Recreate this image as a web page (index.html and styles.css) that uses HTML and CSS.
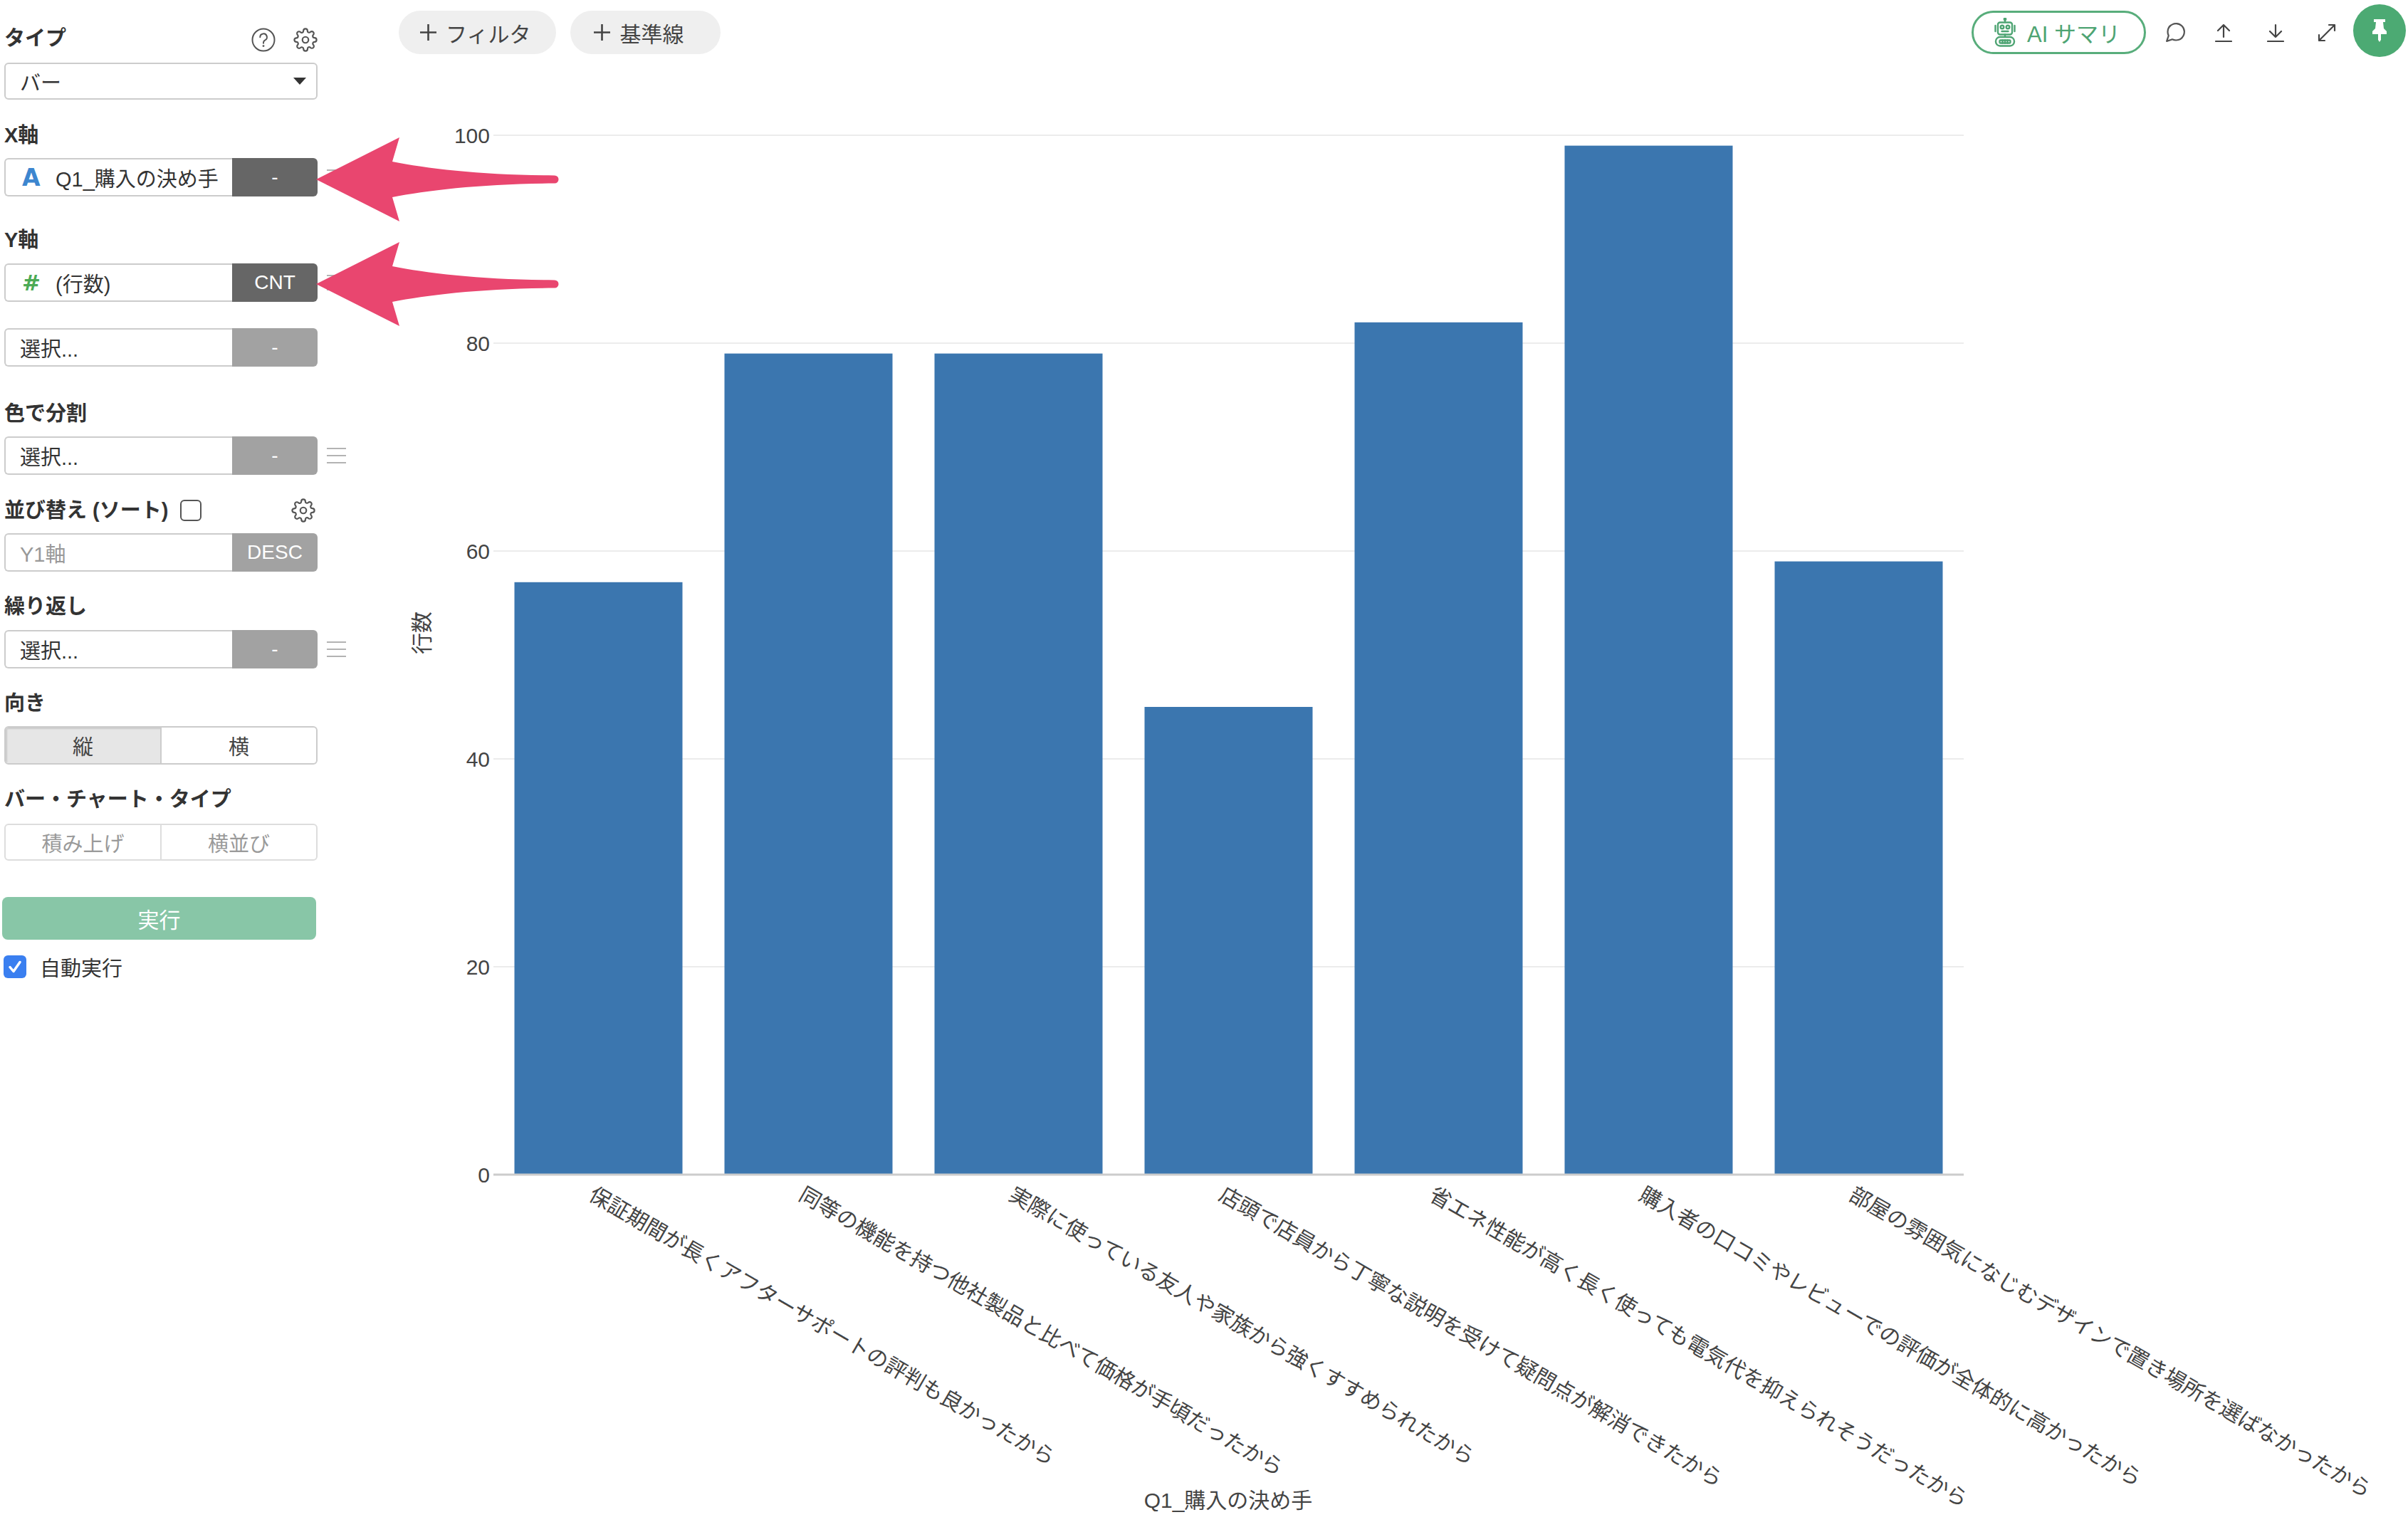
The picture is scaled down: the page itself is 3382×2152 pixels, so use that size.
FILE: index.html
```html
<!DOCTYPE html>
<html lang="ja">
<head>
<meta charset="utf-8">
<title>バー・チャート</title>
<link rel="stylesheet" href="styles.css">
</head>
<body>
<div class="app">
  <aside class="sidebar">
    <div class="head-row">
      <span class="label">タイプ</span>
      <span class="head-icons">
        <svg class="icon-help" viewBox="0 0 34 34"><circle cx="17" cy="17" r="15.5"/><path d="M12.3 13.2a4.8 4.8 0 1 1 7 4.2c-1.6.9-2.3 1.7-2.3 3.4v1"/><circle class="dot" cx="17" cy="25.6" r="1.4"/></svg>
        <svg class="icon-gear" viewBox="0 0 24 24"><circle cx="12" cy="12" r="3"/><path d="M19.4 15a1.65 1.65 0 0 0 .33 1.82l.06.06a2 2 0 0 1 0 2.83 2 2 0 0 1-2.83 0l-.06-.06a1.65 1.65 0 0 0-1.82-.33 1.65 1.65 0 0 0-1 1.51V21a2 2 0 0 1-2 2 2 2 0 0 1-2-2v-.09A1.65 1.65 0 0 0 9 19.4a1.65 1.65 0 0 0-1.820.33l-.06.06a2 2 0 0 1-2.83 0 2 2 0 0 1 0-2.83l.06-.06a1.65 1.65 0 0 0 .33-1.82 1.65 1.65 0 0 0-1.51-1H3a2 2 0 0 1-2-2 2 2 0 0 1 2-2h.09A1.65 1.65 0 0 0 4.6 9a1.65 1.65 0 0 0-.33-1.82l-.06-.06a2 2 0 0 1 0-2.83 2 2 0 0 1 2.83 0l.06.06a1.65 1.65 0 0 0 1.82.33H9a1.65 1.65 0 0 0 1-1.51V3a2 2 0 0 1 2-2 2 2 0 0 1 2 2v.09a1.65 1.65 0 0 0 1 1.51 1.65 1.65 0 0 0 1.82-.33l.06-.06a2 2 0 0 1 2.83 0 2 2 0 0 1 0 2.83l-.06.06a1.65 1.65 0 0 0-.33 1.82V9a1.65 1.65 0 0 0 1.51 1H21a2 2 0 0 1 2 2 2 2 0 0 1-2 2h-.09a1.65 1.65 0 0 0-1.51 1z"/></svg>
      </span>
    </div>
    <div class="select mt-16">
      <span>バー</span>
      <span class="caret"></span>
    </div>

    <div class="label mt-32">X軸</div>
    <div class="row mt-14">
      <div class="field">
        <span class="field-text"><span class="type-icon type-str">A</span>Q1_購入の決め手</span>
        <span class="field-btn dark">-</span>
      </div>
      <svg class="menu" viewBox="0 0 27 22"><path d="M0 1h27M0 11h27M0 21h27"/></svg>
    </div>

    <div class="label mt-43">Y軸</div>
    <div class="row mt-15">
      <div class="field">
        <span class="field-text"><span class="type-icon type-num">#</span>(行数)</span>
        <span class="field-btn dark">CNT</span>
      </div>
      <svg class="menu" viewBox="0 0 27 22"><path d="M0 1h27M0 11h27M0 21h27"/></svg>
    </div>

    <div class="row mt-37">
      <div class="field">
        <span class="field-text">選択...</span>
        <span class="field-btn light">-</span>
      </div>
    </div>

    <div class="label mt-48">色で分割</div>
    <div class="row mt-14">
      <div class="field">
        <span class="field-text">選択...</span>
        <span class="field-btn light">-</span>
      </div>
      <svg class="menu" viewBox="0 0 27 22"><path d="M0 1h27M0 11h27M0 21h27"/></svg>
    </div>

    <div class="sort-row mt-32">
      <span class="label">並び替え (ソート)</span>
      <span class="box"></span>
      <svg class="icon-gear push" viewBox="0 0 24 24"><circle cx="12" cy="12" r="3"/><path d="M19.4 15a1.65 1.65 0 0 0 .33 1.82l.06.06a2 2 0 0 1 0 2.83 2 2 0 0 1-2.83 0l-.06-.06a1.65 1.65 0 0 0-1.82-.33 1.65 1.65 0 0 0-1 1.51V21a2 2 0 0 1-2 2 2 2 0 0 1-2-2v-.09A1.65 1.65 0 0 0 9 19.4a1.65 1.65 0 0 0-1.82.33l-.06.06a2 2 0 0 1-2.83 0 2 2 0 0 1 0-2.83l.06-.06a1.65 1.65 0 0 0 .33-1.82 1.65 1.65 0 0 0-1.51-1H3a2 2 0 0 1-2-2 2 2 0 0 1 2-2h.09A1.65 1.65 0 0 0 4.6 9a1.65 1.65 0 0 0-.33-1.82l-.06-.06a2 2 0 0 1 0-2.83 2 2 0 0 1 2.83 0l.06.06a1.65 1.65 0 0 0 1.82.33H9a1.65 1.65 0 0 0 1-1.51V3a2 2 0 0 1 2-2 2 2 0 0 1 2 2v.09a1.65 1.65 0 0 0 1 1.51 1.65 1.65 0 0 0 1.82-.33l.06-.06a2 2 0 0 1 2.83 0 2 2 0 0 1 0 2.83l-.06.06a1.65 1.65 0 0 0-.33 1.82V9a1.65 1.65 0 0 0 1.51 1H21a2 2 0 0 1 2 2 2 2 0 0 1-2 2h-.09a1.65 1.65 0 0 0-1.51 1z"/></svg>
    </div>
    <div class="row mt-14">
      <div class="field">
        <span class="field-text muted">Y1軸</span>
        <span class="field-btn light">DESC</span>
      </div>
    </div>

    <div class="label mt-31">繰り返し</div>
    <div class="row mt-15">
      <div class="field">
        <span class="field-text">選択...</span>
        <span class="field-btn light">-</span>
      </div>
      <svg class="menu" viewBox="0 0 27 22"><path d="M0 1h27M0 11h27M0 21h27"/></svg>
    </div>

    <div class="label mt-31">向き</div>
    <div class="toggle mt-14">
      <span class="seg active">縦</span>
      <span class="seg">横</span>
    </div>

    <div class="label mt-31">バー・チャート・タイプ</div>
    <div class="toggle disabled mt-16">
      <span class="seg">積み上げ</span>
      <span class="seg">横並び</span>
    </div>

    <div class="run mt-51">実行</div>

    <div class="auto mt-20">
      <span class="check"><svg viewBox="0 0 32 32"><path d="M9 16.5l5 6 9-13"/></svg></span>
      <span>自動実行</span>
    </div>
  </aside>

  <main class="main">
    <div class="toolbar">
      <div class="pills">
        <span class="pill"><svg class="plus" viewBox="0 0 25 25"><path d="M12.5 1v23M1 12.5h23"/></svg>フィルタ</span>
        <span class="pill pill-wide"><svg class="plus" viewBox="0 0 25 25"><path d="M12.5 1v23M1 12.5h23"/></svg>基準線</span>
      </div>
      <div class="tools">
        <span class="ai-pill">
          <svg class="robot" viewBox="0 0 30 41"><path d="M15 1v5"/><circle cx="15" cy="2" r="1.2"/><rect x="5" y="6.5" width="20" height="17" rx="3"/><path d="M1.5 11v8M28.5 11v8"/><circle cx="11" cy="13" r="2.3"/><circle cx="19" cy="13" r="2.3"/><path d="M10.5 19h9"/><path d="M15 23.5v3"/><rect x="2" y="27" width="26" height="12.5" rx="6"/><rect x="7.5" y="31.5" width="15" height="4" rx="1"/><path d="M11.5 31.5v4M15 31.5v4M18.5 31.5v4"/></svg>
          <span class="ai-text">AI サマリ</span>
        </span>
        <span class="tool t-comment"><svg viewBox="0 0 24 24"><path d="M21 11.5a8.38 8.38 0 0 1-.9 3.8 8.5 8.5 0 0 1-7.6 4.7 8.38 8.38 0 0 1-3.8-.9L3 21l1.9-5.7a8.38 8.38 0 0 1-.9-3.8 8.5 8.5 0 0 1 4.7-7.6 8.38 8.38 0 0 1 3.8-.9h.5a8.48 8.48 0 0 1 8 8v.5z"/></svg></span>
        <span class="tool t-up"><svg viewBox="0 0 24 26"><path d="M12 2v17M4 10l8-8 8 8M1 25h22"/></svg></span>
        <span class="tool t-down"><svg viewBox="0 0 24 26"><path d="M12 2v17M4 11l8 8 8-8M1 25h22"/></svg></span>
        <span class="tool t-expand"><svg viewBox="0 0 28 28"><path d="M3 25L25 3M17 3h8v8M3 17v8h8"/></svg></span>
        <span class="pin"><svg viewBox="0 0 24 34"><path d="M4 1h16v4h-3l1 9 4 4v4h-8v8l-2 3-2-3v-8H2v-4l4-4 1-9H4z"/></svg></span>
      </div>
    </div>

    <svg class="chart" viewBox="506 76 2876 2076">
      <g class="grid">
        <line x1="693" y1="190" x2="2758" y2="190"/>
        <line x1="693" y1="482" x2="2758" y2="482"/>
        <line x1="693" y1="774" x2="2758" y2="774"/>
        <line x1="693" y1="1066" x2="2758" y2="1066"/>
        <line x1="693" y1="1358" x2="2758" y2="1358"/>
      </g>
      <g class="ticks">
        <text x="688" y="190">100</text>
        <text x="688" y="482">80</text>
        <text x="688" y="774">60</text>
        <text x="688" y="1066">40</text>
        <text x="688" y="1358">20</text>
        <text x="688" y="1650">0</text>
      </g>
      <g class="bars">
        <rect x="722.5" y="817.8" width="236" height="832.2"/>
        <rect x="1017.5" y="496.6" width="236" height="1153.4"/>
        <rect x="1312.5" y="496.6" width="236" height="1153.4"/>
        <rect x="1607.5" y="993" width="236" height="657"/>
        <rect x="1902.5" y="452.8" width="236" height="1197.2"/>
        <rect x="2197.5" y="204.6" width="236" height="1445.4"/>
        <rect x="2492.5" y="788.6" width="236" height="861.4"/>
      </g>
      <line class="domain" x1="693" y1="1650" x2="2758" y2="1650"/>
      <g class="xlabels">
        <text transform="translate(838 1662) rotate(30)" dy="0.86em">保証期間が長くアフターサポートの評判も良かったから</text>
        <text transform="translate(1133 1662) rotate(30)" dy="0.86em">同等の機能を持つ他社製品と比べて価格が手頃だったから</text>
        <text transform="translate(1428 1662) rotate(30)" dy="0.86em">実際に使っている友人や家族から強くすすめられたから</text>
        <text transform="translate(1723 1662) rotate(30)" dy="0.86em">店頭で店員から丁寧な説明を受けて疑問点が解消できたから</text>
        <text transform="translate(2018 1662) rotate(30)" dy="0.86em">省エネ性能が高く長く使っても電気代を抑えられそうだったから</text>
        <text transform="translate(2313 1662) rotate(30)" dy="0.86em">購入者の口コミやレビューでの評価が全体的に高かったから</text>
        <text transform="translate(2608 1662) rotate(30)" dy="0.86em">部屋の雰囲気になじむデザインで置き場所を選ばなかったから</text>
      </g>
      <text class="ytitle" transform="translate(592 889) rotate(-90)">行数</text>
      <text class="xtitle" x="1725" y="2107">Q1_購入の決め手</text>
    </svg>
  </main>
</div>

<svg class="arrows" viewBox="0 0 3382 2152">
  <path d="M444 252L561 193L551 227C600 237 680 246 779 246.5A5.5 5.5 0 0 1 779 257.5C680 258 600 267 551 277L561 311Z"/>
  <path d="M444 399L561 340L551 374C600 384 680 393 779 393.5A5.5 5.5 0 0 1 779 404.5C680 405 600 414 551 424L561 458Z"/>
</svg>
</body>
</html>
```

FILE: styles.css
```css
html, body {
  margin: 0;
  padding: 0;
}

body {
  width: 3382px;
  height: 2152px;
  overflow: hidden;
  position: relative;
  background: #ffffff;
  color: #333333;
  font-family: "Liberation Sans", "Noto Sans CJK JP", sans-serif;
  font-size: 29px;
}

.app {
  display: flex;
  align-items: flex-start;
}

/* ---------- sidebar ---------- */
.sidebar {
  flex: none;
  width: 500px;
  margin-left: 6px;
  padding-top: 36px;
  box-sizing: border-box;
  display: flex;
  flex-direction: column;
}

.mt-14 { margin-top: 14px; }
.mt-15 { margin-top: 15px; }
.mt-16 { margin-top: 16px; }
.mt-20 { margin-top: 20px; }
.mt-31 { margin-top: 31px; }
.mt-32 { margin-top: 32px; }
.mt-37 { margin-top: 37px; }
.mt-43 { margin-top: 43px; }
.mt-48 { margin-top: 48px; }
.mt-51 { margin-top: 51px; }

.label {
  display: block;
  height: 36px;
  line-height: 36px;
  font-weight: 700;
  color: #333333;
  white-space: nowrap;
}

.head-row {
  width: 440px;
  height: 36px;
  display: flex;
  align-items: center;
  justify-content: space-between;
}

.head-icons {
  display: flex;
  align-items: center;
  gap: 25px;
  margin-top: 4px;
}

.icon-help {
  width: 34px;
  height: 34px;
  fill: none;
  stroke: #555555;
  stroke-width: 2;
  stroke-linecap: round;
}

.icon-help .dot {
  fill: #555555;
  stroke: none;
}

.icon-gear {
  width: 34px;
  height: 34px;
  fill: none;
  stroke: #555555;
  stroke-width: 1.55;
  stroke-linecap: round;
  stroke-linejoin: round;
}

.select {
  width: 440px;
  height: 52px;
  box-sizing: border-box;
  border: 2px solid #cccccc;
  border-radius: 6px;
  display: flex;
  align-items: center;
  justify-content: space-between;
  padding: 0 14px 0 20px;
  color: #333333;
}

.caret {
  width: 0;
  height: 0;
  border-left: 9px solid transparent;
  border-right: 9px solid transparent;
  border-top: 10px solid #333333;
}

.row {
  width: 500px;
  height: 54px;
  display: flex;
  align-items: center;
}

.field {
  width: 440px;
  height: 54px;
  display: flex;
  flex: none;
}

.field-text {
  flex: 1;
  box-sizing: border-box;
  border: 2px solid #cccccc;
  border-right: none;
  border-radius: 6px 0 0 6px;
  display: flex;
  align-items: center;
  padding-left: 20px;
  color: #333333;
  white-space: nowrap;
  overflow: hidden;
}

.field-text.muted {
  color: #999999;
}

.type-icon {
  display: inline-block;
  width: 50px;
  padding-left: 3px;
  box-sizing: border-box;
  font-family: "DejaVu Sans", "Liberation Sans", sans-serif;
  font-weight: 700;
  font-size: 33px;
  line-height: 1;
}

.type-str { color: #3d86cf; }
.type-num { color: #4caa55; font-size: 31px; }

.field-btn {
  width: 120px;
  flex: none;
  border-radius: 0 6px 6px 0;
  display: flex;
  align-items: center;
  justify-content: center;
  color: #ffffff;
  font-size: 28px;
}

.field-btn.dark { background: #666666; }
.field-btn.light { background: #a2a2a2; }

.menu {
  width: 27px;
  height: 22px;
  margin-left: 13px;
  fill: none;
  stroke: #9a9a9a;
  stroke-width: 1.6;
}

.sort-row {
  width: 440px;
  height: 36px;
  display: flex;
  align-items: center;
}

.box {
  width: 30px;
  height: 30px;
  box-sizing: border-box;
  border: 2px solid #555555;
  border-radius: 6px;
  margin-left: 17px;
}

.push {
  margin-left: auto;
  margin-right: 3px;
}

.toggle {
  width: 440px;
  height: 54px;
  box-sizing: border-box;
  border: 2px solid #cccccc;
  border-radius: 6px;
  display: flex;
  overflow: hidden;
}

.toggle.disabled {
  height: 52px;
  border-color: #dddddd;
}

.seg {
  flex: 1;
  display: flex;
  align-items: center;
  justify-content: center;
  color: #444444;
}

.seg + .seg {
  border-left: 2px solid #cccccc;
}

.seg.active {
  background: #e6e6e6;
  box-shadow: inset 2px 2px 2px rgba(0, 0, 0, 0.12);
}

.toggle.disabled .seg {
  color: #9a9a9a;
}

.toggle.disabled .seg + .seg {
  border-left-color: #dddddd;
}

.run {
  width: 441px;
  height: 60px;
  margin-left: -3px;
  border-radius: 8px;
  background: #88c6a7;
  color: #ffffff;
  display: flex;
  align-items: center;
  justify-content: center;
  font-size: 30px;
}

.auto {
  height: 36px;
  display: flex;
  align-items: center;
  gap: 19px;
  margin-left: -1px;
  color: #333333;
}

.check {
  width: 32px;
  height: 32px;
  border-radius: 6px;
  background: #3a7ff0;
  display: flex;
}

.check svg {
  width: 32px;
  height: 32px;
  fill: none;
  stroke: #ffffff;
  stroke-width: 3.5;
  stroke-linecap: round;
  stroke-linejoin: round;
}

/* ---------- main ---------- */
.main {
  flex: 1;
  display: flex;
  flex-direction: column;
  min-width: 0;
}

.toolbar {
  height: 76px;
  box-sizing: border-box;
  padding: 15px 3px 0 54px;
  display: flex;
  justify-content: space-between;
  align-items: flex-start;
}

.pills {
  display: flex;
  gap: 20px;
}

.pill {
  height: 61px;
  box-sizing: border-box;
  padding: 0 36px 0 29px;
  border-radius: 31px;
  background: #efefef;
  color: #444444;
  font-size: 30px;
  display: flex;
  align-items: center;
}

.pill-wide {
  padding-right: 52px;
  padding-left: 32px;
}

.plus {
  width: 25px;
  height: 25px;
  margin-right: 12px;
  fill: none;
  stroke: #444444;
  stroke-width: 2.6;
}

.tools {
  display: flex;
  align-items: center;
  height: 61px;
}

.ai-pill {
  height: 61px;
  box-sizing: border-box;
  border: 3px solid #58ad7b;
  border-radius: 31px;
  padding: 0 33px 0 29px;
  display: flex;
  align-items: center;
  color: #4ea473;
  font-size: 31px;
}

.robot {
  width: 30px;
  height: 41px;
  margin-right: 16px;
  fill: none;
  stroke: #4ea473;
  stroke-width: 2.4;
  stroke-linecap: round;
  stroke-linejoin: round;
}

.tool {
  width: 40px;
  height: 40px;
  display: flex;
  align-items: center;
  justify-content: center;
  margin-left: 30px;
}

.tool svg {
  fill: none;
  stroke: #444444;
  stroke-width: 2.2;
  stroke-linecap: round;
  stroke-linejoin: round;
}

.t-comment { margin-left: 21px; }
.t-comment svg { width: 33px; height: 33px; stroke: #555555; stroke-width: 1.6; }
.t-up { margin-left: 28px; }
.t-up svg, .t-down svg { width: 24px; height: 26px; }
.t-down { margin-left: 33px; }
.t-expand { margin-left: 32px; }
.t-expand svg { width: 28px; height: 28px; }

.pin {
  width: 74px;
  height: 74px;
  margin-left: 17px;
  margin-top: -5px;
  border-radius: 50%;
  background: #4caa73;
  display: flex;
  align-items: center;
  justify-content: center;
}

.pin svg {
  width: 24px;
  height: 34px;
  fill: #ffffff;
}

/* ---------- chart ---------- */
.chart {
  display: block;
  width: 2876px;
  height: 2076px;
  font-family: "Liberation Sans", "Noto Sans CJK JP", sans-serif;
}

.grid line {
  stroke: #ececec;
  stroke-width: 2;
}

.domain {
  stroke: #cccccc;
  stroke-width: 3;
}

.bars rect {
  fill: #3b76af;
}

.ticks text {
  font-size: 30px;
  fill: #444444;
  text-anchor: end;
  dominant-baseline: central;
}

.xlabels text {
  font-size: 30px;
  fill: #444444;
}

.ytitle,
.xtitle {
  font-size: 30px;
  fill: #444444;
  text-anchor: middle;
  dominant-baseline: central;
}

/* ---------- annotation arrows ---------- */
.arrows {
  position: absolute;
  left: 0;
  top: 0;
  width: 3382px;
  height: 2152px;
  pointer-events: none;
  fill: #e9466f;
}
```
